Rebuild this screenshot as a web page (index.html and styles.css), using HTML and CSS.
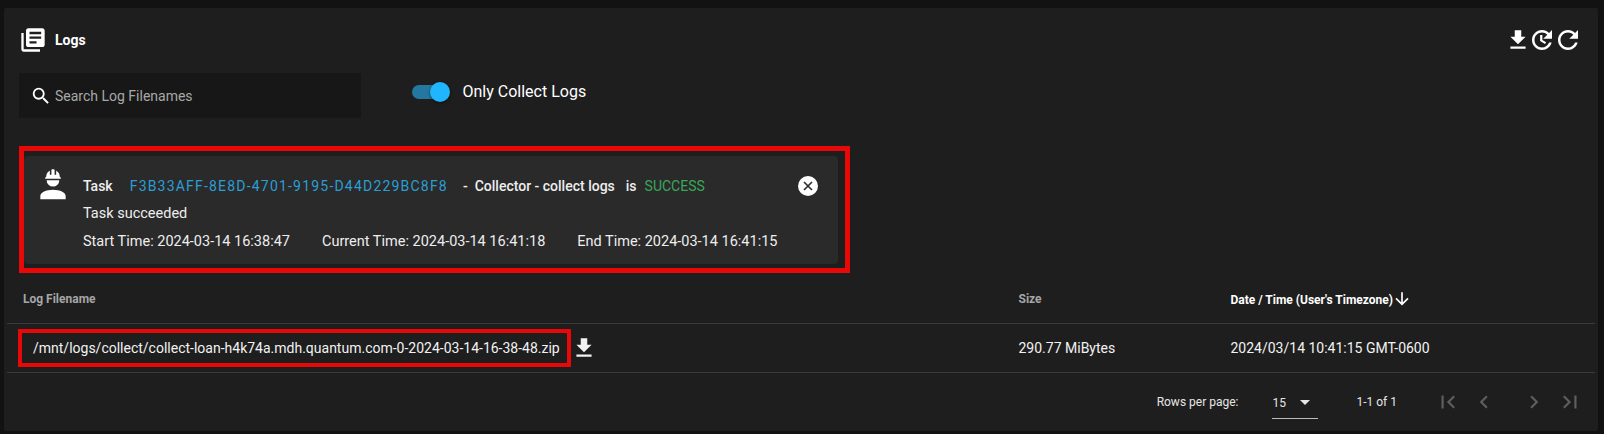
FILE: index.html
```html
<!DOCTYPE html>
<html lang="en">
<head>
    <meta charset="UTF-8">
    <title>Logs</title>
    <link rel="stylesheet" href="styles.css">
</head>
<body>
    <div class="card">
        <div class="card-header">
            <svg class="logs-icon" viewBox="0 0 24 24"><path d="M4 6H2v14c0 1.1.9 2 2 2h14v-2H4V6zm16-4H8c-1.1 0-2 .9-2 2v12c0 1.1.9 2 2 2h12c1.1 0 2-.9 2-2V4c0-1.1-.9-2-2-2zm-1 9H9V9h10v2zm-4 4H9v-2h6v2zm4-8H9V5h10v2z"/></svg>
            <h1>Logs</h1>
            <div class="header-actions">
                <svg class="download-icon" viewBox="0 0 24 24"><path d="M5,20H19V18H5M19,9H15V3H9V9H5L12,16L19,9Z"/></svg>
                <svg class="action-icon" viewBox="0 0 24 24"><path d="M17.65 6.35C16.2 4.9 14.21 4 12 4c-4.42 0-7.99 3.58-7.99 8s3.57 8 7.99 8c3.73 0 6.84-2.55 7.73-6h-2.08c-.82 2.33-3.04 4-5.65 4-3.31 0-6-2.69-6-6s2.69-6 6-6c1.66 0 3.14.69 4.22 1.78L13 11h7V4l-2.35 2.35z"/><path d="M10.5 8h1.8v4l3 1.8-.9 1.4-3.9-2.4z"/></svg>
                <svg class="action-icon" viewBox="0 0 24 24"><path d="M17.65 6.35C16.2 4.9 14.21 4 12 4c-4.42 0-7.99 3.58-7.99 8s3.57 8 7.99 8c3.73 0 6.84-2.55 7.73-6h-2.08c-.82 2.33-3.04 4-5.65 4-3.31 0-6-2.69-6-6s2.69-6 6-6c1.66 0 3.14.69 4.22 1.78L13 11h7V4l-2.35 2.35z"/></svg>
            </div>
        </div>

        <div class="filter-row">
            <div class="search-box">
                <svg class="search-icon" viewBox="0 0 24 24"><path d="M9.5,3A6.5,6.5 0 0,1 16,9.5C16,11.11 15.41,12.59 14.44,13.73L14.71,14H15.5L20.5,19L19,20.5L14,15.5V14.71L13.73,14.44C12.59,15.41 11.11,16 9.5,16A6.5,6.5 0 0,1 3,9.5A6.5,6.5 0 0,1 9.5,3M9.5,5C7,5 5,7 5,9.5C5,12 7,14 9.5,14C12,14 14,12 14,9.5C14,7 12,5 9.5,5Z"/></svg>
                <span>Search Log Filenames</span>
            </div>
            <label class="switch-label">
                <span class="switch"><span class="switch-knob"></span></span>
                <span class="switch-text">Only Collect Logs</span>
            </label>
        </div>

        <div class="highlight task-highlight">
            <div class="task-card">
                <svg class="worker-icon" viewBox="0 0 24 24"><path d="M12,15C7.58,15 4,16.79 4,19V21H20V19C20,16.79 16.42,15 12,15M8,9A4,4 0 0,0 12,13A4,4 0 0,0 16,9M11.5,2C11.2,2 11,2.21 11,2.5V5.5H10V3C10,3 7.75,3.86 7.75,6.75C7.75,6.75 7,6.89 7,8H17C16.95,6.89 16.25,6.75 16.25,6.75C16.25,3.86 14,3 14,3V5.5H13V2.5C13,2.21 12.81,2 12.5,2H11.5Z"/></svg>
                <div class="task-body">
                    <div class="task-title">
                        <strong>Task</strong>
                        <span class="task-id">F3B33AFF-8E8D-4701-9195-D44D229BC8F8</span>
                        <strong class="task-dash">-</strong>
                        <strong class="task-name">Collector - collect logs</strong>
                        <strong class="task-is">is</strong>
                        <span class="task-status">SUCCESS</span>
                    </div>
                    <div class="task-message">Task succeeded</div>
                    <div class="task-times">
                        <span>Start Time: 2024-03-14 16:38:47</span>
                        <span>Current Time: 2024-03-14 16:41:18</span>
                        <span>End Time: 2024-03-14 16:41:15</span>
                    </div>
                </div>
                <svg class="close-icon" viewBox="0 0 20 20"><circle cx="10" cy="10" r="10"/><path class="close-x" d="M6 6l8 8M14 6l-8 8"/></svg>
            </div>
        </div>

        <table class="log-table">
            <colgroup>
                <col class="col-name">
                <col class="col-size">
                <col>
            </colgroup>
            <thead>
                <tr>
                    <th>Log Filename</th>
                    <th>Size</th>
                    <th class="sorted">Date / Time (User's Timezone)
                        <svg class="sort-icon" viewBox="0 0 24 24"><path d="M11,4H13V16L18.5,10.5L19.92,11.92L12,19.84L4.08,11.92L5.5,10.5L11,16V4Z"/></svg>
                    </th>
                </tr>
            </thead>
            <tbody>
                <tr>
                    <td class="name-cell">
                        <div class="name-wrap">
                            <span class="highlight file-highlight">/mnt/logs/collect/collect-loan-h4k74a.mdh.quantum.com-0-2024-03-14-16-38-48.zip</span>
                            <svg class="file-download" viewBox="0 0 24 24"><path d="M5,20H19V18H5M19,9H15V3H9V9H5L12,16L19,9Z"/></svg>
                        </div>
                    </td>
                    <td>290.77 MiBytes</td>
                    <td>2024/03/14 10:41:15 GMT-0600</td>
                </tr>
            </tbody>
        </table>

        <div class="pagination">
            <span class="rows-label">Rows per page:</span>
            <div class="rows-select">
                <span>15</span>
                <svg class="select-arrow" viewBox="0 0 10 5"><path d="M0 0h10L5 5z"/></svg>
            </div>
            <span class="page-range">1-1 of 1</span>
            <div class="page-buttons">
                <svg viewBox="0 0 24 24"><path d="M18.41,16.59L13.82,12L18.41,7.41L17,6L11,12L17,18L18.41,16.59M6,6H8V18H6V6Z"/></svg>
                <svg viewBox="0 0 24 24"><path d="M15.41,16.58L10.83,12L15.41,7.41L14,6L8,12L14,18L15.41,16.58Z"/></svg>
                <svg viewBox="0 0 24 24"><path d="M8.59,16.58L13.17,12L8.59,7.41L10,6L16,12L10,18L8.59,16.58Z"/></svg>
                <svg viewBox="0 0 24 24"><path d="M5.59,7.41L10.18,12L5.59,16.59L7,18L13,12L7,6L5.59,7.41M16,6H18V18H16V6Z"/></svg>
            </div>
        </div>
    </div>
</body>
</html>
```

FILE: styles.css
```css
html, body {
    height: 100%;
}
body {
    margin: 0;
    padding: 8px 6px 3px 4px;
    box-sizing: border-box;
    background-color: #121212;
    color: #fff;
    font-family: Roboto, "Liberation Sans", sans-serif;
    font-size: 14px;
    overflow: hidden;
}
svg {
    display: block;
    fill: currentColor;
    flex: none;
}
.card {
    height: 100%;
    padding: 0 3px;
    background-color: #1e1e1e;
    border-radius: 2px;
}
.card-header {
    display: flex;
    align-items: center;
    height: 64px;
    padding-left: 12px;
}
.logs-icon {
    width: 28px;
    height: 28px;
}
h1 {
    margin: 0 0 0 8px;
    font-size: 14px;
    font-weight: 700;
}
.header-actions {
    display: flex;
    align-items: center;
    margin-left: auto;
    margin-right: 12px;
}
.download-icon {
    width: 26px;
    height: 26px;
}
.action-icon {
    width: 30px;
    height: 30px;
    margin-left: -4px;
}
.filter-row {
    display: flex;
    align-items: flex-start;
    height: 73px;
    padding-left: 12px;
    margin-top: 1px;
}
.search-box {
    display: flex;
    align-items: center;
    width: 342px;
    height: 45px;
    padding: 1px 0 0 11px;
    box-sizing: border-box;
    background-color: #171717;
    border-radius: 2px;
    color: #a8a8a8;
}
.search-icon {
    width: 22px;
    height: 22px;
    margin-right: 3px;
    color: #fff;
}
.switch-label {
    display: flex;
    align-items: center;
    height: 38px;
    margin-left: 51px;
    font-size: 16px;
}
.switch-text {
    margin-bottom: 2px;
}
.switch {
    position: relative;
    display: block;
    width: 34px;
    height: 14px;
    margin-right: 16.5px;
    border-radius: 7px;
    background-color: #24789f;
}
.switch-knob {
    position: absolute;
    top: -3px;
    right: -4px;
    width: 20px;
    height: 20px;
    border-radius: 50%;
    background-color: #1fb6ff;
    box-shadow: 0 1px 3px rgba(0,0,0,0.5);
}
.highlight {
    border-style: solid;
    border-color: #e80808;
}
.task-highlight {
    width: 831px;
    height: 127px;
    margin-left: 12px;
    padding: 5px 7px 4px 0;
    box-sizing: border-box;
    border-width: 5px;
}
.task-card {
    display: flex;
    height: 100%;
    box-sizing: border-box;
    padding: 14px 0 0 10px;
    background-color: #2a2a2a;
    border-radius: 4px;
}
.worker-icon {
    width: 38px;
    height: 38px;
    margin-top: -4px;
    margin-right: 11px;
}
.task-body {
    flex: 1;
    color: #eee;
}
.task-title {
    display: flex;
    align-items: center;
    height: 24px;
    margin-top: 4px;
}
.task-title strong {
    font-weight: 500;
}
.task-id {
    margin-left: 17px;
    color: #2a9fd6;
    letter-spacing: 1.2px;
}
.task-dash {
    margin-left: 15px;
}
.task-name {
    margin-left: 7px;
}
.task-is {
    margin-left: 11px;
}
.task-status {
    margin-left: 8px;
    color: #38a858;
}
.task-message {
    margin-top: 4px;
    font-size: 14.5px;
    line-height: 24px;
}
.task-times {
    display: flex;
    gap: 32px;
    margin-top: 4px;
    font-size: 14.5px;
    line-height: 24px;
}
.close-icon {
    width: 20px;
    height: 20px;
    margin: 6px 20px 0 0;
    color: #fff;
}
.close-x {
    fill: none;
    stroke: #2a2a2a;
    stroke-width: 1.6;
}
.log-table {
    width: 100%;
    margin-top: 2px;
    border-collapse: collapse;
    table-layout: fixed;
}
.col-name {
    width: 1011.5px;
}
.col-size {
    width: 212px;
}
.log-table th {
    height: 48px;
    padding: 0 0 0 16px;
    text-align: left;
    font-size: 12px;
    font-weight: 700;
    color: #a6a6a6;
    border-bottom: 1px solid #3a3a3a;
    white-space: nowrap;
}
.log-table th:nth-child(n+2),
.log-table td:nth-child(n+2) {
    padding-left: 0;
}
.log-table th.sorted {
    color: #fff;
}
.sort-icon {
    display: inline-block;
    width: 20px;
    height: 20px;
    margin-left: -4px;
    vertical-align: -5px;
}
.log-table td {
    height: 48px;
    padding: 0;
    border-bottom: 1px solid #3a3a3a;
    color: #f2f2f2;
}
.name-wrap {
    display: flex;
    align-items: center;
    padding-left: 11px;
}
.file-highlight {
    display: block;
    height: 38px;
    box-sizing: border-box;
    padding: 0 7px 0 11px;
    border-width: 4px;
    line-height: 30px;
    white-space: nowrap;
}
.file-download {
    width: 26px;
    height: 26px;
    margin-top: -1px;
}
.pagination {
    display: flex;
    align-items: center;
    justify-content: flex-end;
    height: 58px;
    padding-right: 12px;
    font-size: 12px;
    color: #e6e6e6;
}
.rows-select {
    display: flex;
    align-items: center;
    width: 46px;
    height: 32px;
    margin: 2px 38px 0 34px;
    box-sizing: border-box;
    border-bottom: 1px solid #bbb;
}
.select-arrow {
    width: 10px;
    height: 5px;
    margin-left: 14px;
}
.page-buttons {
    display: flex;
    gap: 10px;
    margin-left: 38px;
    color: #5e5e5e;
}
.page-buttons svg {
    width: 26px;
    height: 26px;
}
.page-buttons svg:nth-child(3) {
    margin-left: 14px;
}
```
